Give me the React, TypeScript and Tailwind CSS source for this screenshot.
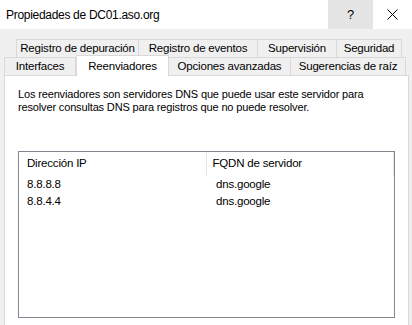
const ui = { fontFamily: '"Liberation Sans", Arial, sans-serif' };

const row1 = [
  { label: "Registro de depuración", w: 123 },
  { label: "Registro de eventos", w: 120 },
  { label: "Supervisión", w: 80 },
  { label: "Seguridad", w: 66 },
];

const row2 = [
  { label: "Interfaces", w: 72 },
  { label: "Reenviadores", w: 93, active: true },
  { label: "Opciones avanzadas", w: 123 },
  { label: "Sugerencias de raíz", w: 116 },
];

const forwarders = [
  { ip: "8.8.8.8", fqdn: "dns.google" },
  { ip: "8.8.4.4", fqdn: "dns.google" },
];

function Tab({ label, w, active }: { label: string; w: number; active?: boolean }) {
  if (active) {
    return (
      <div
        className="relative z-10 -mt-[2px] -mb-px flex h-[21px] items-start justify-center border border-b-0 border-[#d9d9d9] bg-white pt-[2px] text-[11.5px] tracking-[-0.2px] text-black"
        style={{ width: w }}
      >
        {label}
      </div>
    );
  }
  return (
    <div
      className="-ml-px flex h-[18px] items-center justify-center border border-b-0 border-[#d9d9d9] bg-[#f0f0f0] text-[11.5px] tracking-[-0.2px] text-black first:ml-0"
      style={{ width: w }}
    >
      {label}
    </div>
  );
}

export default function App() {
  return (
    <div className="h-[325px] w-[412px] overflow-hidden bg-[#f0f0f0]" style={ui}>
      {/* barra de título */}
      <div className="flex h-[29px] items-stretch bg-white">
        <div className="flex flex-1 items-center pl-[6px] text-[12px] tracking-[-0.3px] text-black">
          Propiedades de DC01.aso.org
        </div>
        <div className="flex w-[45px] items-center justify-center bg-[#e5e5e5] text-[13px] text-black">?</div>
        <div className="flex w-[39px] items-center justify-center">
          <svg width="11" height="11" viewBox="0 0 11 11">
            <path d="M0.5 0.5 L10.5 10.5 M10.5 0.5 L0.5 10.5" stroke="#000" strokeWidth="1" fill="none" />
          </svg>
        </div>
      </div>

      {/* pestañas */}
      <div className="mt-[10px] flex pl-[16px]">
        {row1.map((t) => (
          <Tab key={t.label} {...t} />
        ))}
      </div>
      <div className="flex items-end pl-[4px]">
        {row2.map((t) => (
          <Tab key={t.label} {...t} />
        ))}
      </div>

      {/* contenido */}
      <div className="ml-[4px] mr-[3px] h-[260px] border border-[#d9d9d9] bg-white px-[13px] pt-[12px]">
        <p className="text-[11px] leading-[13px] tracking-[-0.15px] text-black">
          Los reenviadores son servidores DNS que puede usar este servidor para
          <br />
          resolver consultas DNS para registros que no puede resolver.
        </p>

        <div className="mt-[37px] h-[167px] border border-[#828790] bg-white">
          <div className="flex h-[24px] items-center text-[11.5px] tracking-[-0.2px] text-black">
            <div className="flex h-full w-[190px] items-center border-r border-[#e5e5e5] pl-[8px]">Dirección IP</div>
            <div className="flex h-full w-[190px] items-center border-r border-[#e5e5e5] pl-[6px]">FQDN de servidor</div>
          </div>
          {forwarders.map((f) => (
            <div key={f.ip} className="flex h-[17px] items-center text-[11.5px] tracking-[-0.2px] text-black">
              <div className="w-[190px] pl-[8px]">{f.ip}</div>
              <div className="pl-[7px]">{f.fqdn}</div>
            </div>
          ))}
        </div>
      </div>
    </div>
  );
}
